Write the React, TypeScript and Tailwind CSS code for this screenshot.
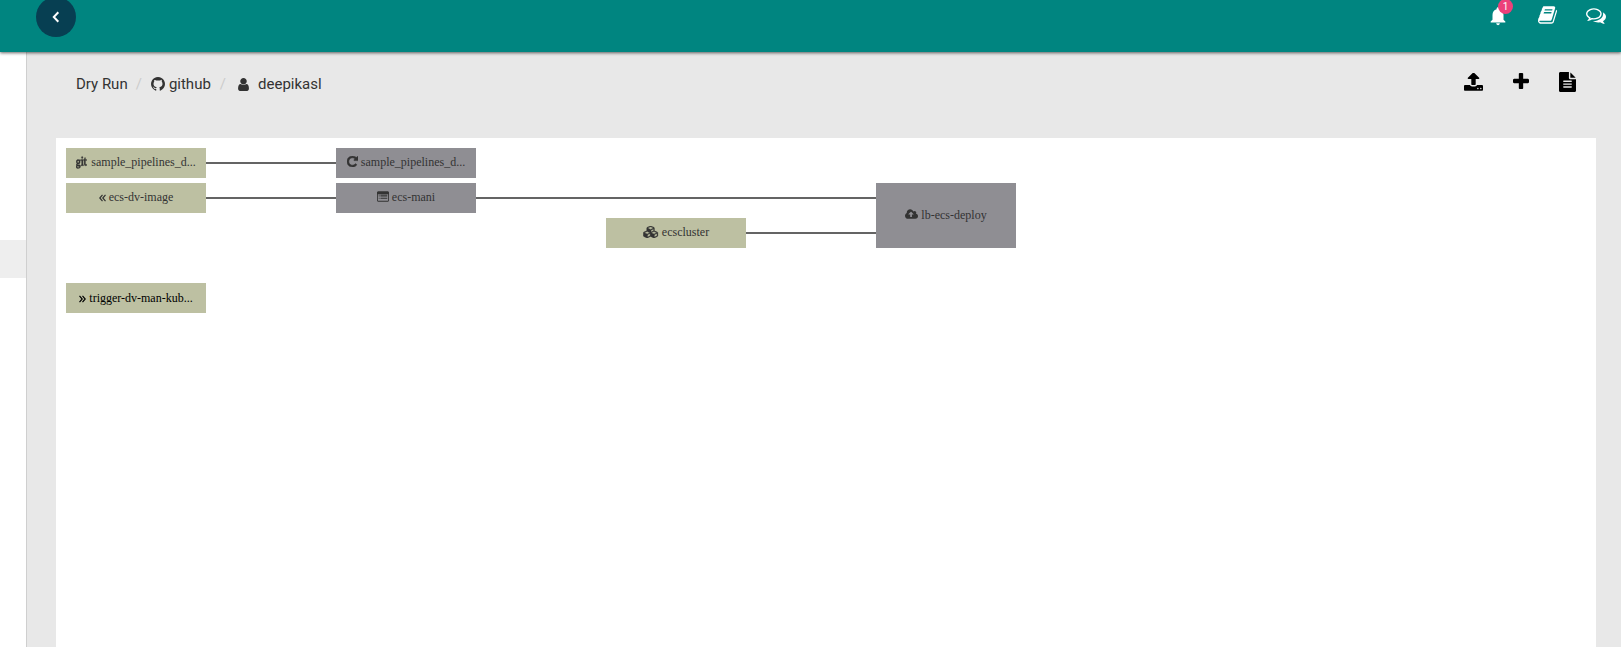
import type { ReactNode } from "react";
import { FaGit } from "react-icons/fa";
import { MdNotifications } from "react-icons/md";

const paths = {
  github:
    "M704 0q209 0 385.5 103t279.5 279.5 103 385.5q0 251-146.5 451.5t-378.5 277.5q-27 5-40-7t-13-30q0-3 .5-76.5t.5-134.5q0-97-52-142 57-6 102.5-18t94-39 81-66.5 53-105 20.5-150.5q0-119-79-206 37-91-8-204-28-9-81 11t-92 44l-38 24q-93-26-192-26t-192 26q-16-11-42.5-27t-83.5-38.5-85-13.5q-45 113-8 204-79 87-79 206 0 85 20.5 150t52.5 105 80.5 67 94 39 102.5 18q-39 36-49 103-21 10-45 15t-57 5-65.5-21.5-55.5-62.5q-19-32-48.5-52t-49.5-24l-20-3q-21 0-29 4.5t-5 11.5 9 14 13 12l7 5q22 10 43.5 38t31.5 51l10 23q13 38 44 61.5t67 30 69.5 7 55.5-3.5l23-4q0 38 .5 88.5t.5 54.5q0 18-13 30t-40 7q-232-77-378.5-277.5t-146.5-451.5q0-209 103-385.5t279.5-279.5 385.5-103z",
  user: "M1536 1399q0 109-62.5 187t-150.5 78h-854q-88 0-150.5-78t-62.5-187q0-85 8.5-160.5t31.5-152 58.5-131 94-89 134.5-34.5q131 128 313 128t313-128q76 0 134.5 34.5t94 89 58.5 131 31.5 152 8.5 160.5zm-256-887q0 159-112.5 271.5t-271.5 112.5-271.5-112.5-112.5-271.5 112.5-271.5 271.5-112.5 271.5 112.5 112.5 271.5z",
  book: "M1639 478q40 57 18 129l-275 906q-19 64-76.5 107.5t-122.5 43.5h-923q-77 0-148.5-53.5t-99.5-131.5q-24-67-2-127 0-4 3-27t4-37q1-8-3-21.5t-3-19.5q2-11 8-21t16.5-23.5 16.5-23.5q23-38 45-91.5t30-91.5q3-10 .5-30t-.5-28q3-11 17-28t17-23q21-36 42-92t25-90q1-9-2.5-32t.5-28q4-13 22-30.5t22-22.5q19-26 42.5-84.5t27.5-96.5q1-8-3-25.5t-2-26.5q2-8 9-18t18-23 17-21q8-12 16.5-30.5t15-35 16-36 19.5-32 26.5-23.5 36-11.5 47.5 5.5l-1 3q38-9 51-9h761q74 0 114 56t18 130l-274 906q-36 119-71.5 153.5t-128.5 34.5h-869q-27 0-38 15-11 16-1 43 24 70 144 70h923q29 0 56-15.5t35-41.5l300-987q7-22 5-57 38 15 59 43zm-1064 2q-4 13 2 22.5t20 9.5h608q13 0 25.5-9.5t16.5-22.5l21-64q4-13-2-22.5t-20-9.5h-608q-13 0-25.5 9.5t-16.5 22.5zm-83 256q-4 13 2 22.5t20 9.5h608q13 0 25.5-9.5t16.5-22.5l21-64q4-13-2-22.5t-20-9.5h-608q-13 0-25.5 9.5t-16.5 22.5z",
  comments:
    "M704 384q-153 0-286 52t-211.5 141-78.5 191q0 82 53 158t149 132l97 56-35 84q34-20 62-39l44-31 53 10q78 14 153 14 153 0 286-52t211.5-141 78.5-191-78.5-191-211.5-141-286-52zm0-128q191 0 353.5 68.5t256.5 186.5 94 257-94 257-256.5 186.5-353.5 68.5q-86 0-176-16-124 88-278 128-36 9-86 16h-3q-11 0-20.5-8t-11.5-21q-1-3-1-6.5t.5-6.5 2-6l2.5-5 3.5-5.5 4-5 4.5-5 4-4.5q5-6 23-25t26-29.5 22.5-29 25-38.5 20.5-44q-124-72-195-177t-71-224q0-139 94-257t256.5-186.5 353.5-68.5zm822 1169q10 24 20.5 44t25 38.5 22.5 29 26 29.5 23 25q1 1 4 4.5t4.5 5 4 5 3.5 5.5l2.5 5 2 6 .5 6.5-1 6.5q-3 14-13 22t-22 7q-50-7-86-16-154-40-278-128-90 16-176 16-271 0-472-132 58 4 88 4 161 0 309-45t264-129q125-92 192-212t67-254q0-77-23-152 129 71 204 178t75 230q0 120-71 224.5t-195 176.5z",
  upload:
    "M1344 1472q0-26-19-45t-45-19-45 19-19 45 19 45 45 19 45-19 19-45zm256 0q0-26-19-45t-45-19-45 19-19 45 19 45 45 19 45-19 19-45zm128-224v320q0 40-28 68t-68 28h-1472q-40 0-68-28t-28-68v-320q0-40 28-68t68-28h427q21 56 70.5 92t110.5 36h256q61 0 110.5-36t70.5-92h427q40 0 68 28t28 68zm-325-648q-17 40-59 40h-256v448q0 26-19 45t-45 19h-256q-26 0-45-19t-19-45v-448h-256q-42 0-59-40-17-39 14-70l448-448q18-19 45-19t45 19l448 448q31 31 14 70z",
  plus: "M1600 736v192q0 40-28 68t-68 28h-416v416q0 40-28 68t-68 28h-192q-40 0-68-28t-28-68v-416h-416q-40 0-68-28t-28-68v-192q0-40 28-68t68-28h416v-416q0-40 28-68t68-28h192q40 0 68 28t28 68v416h416q40 0 68 28t28 68z",
  file: "M1596 476q14 14 28 36h-472v-472q22 14 36 28zm-476 164h544v1056q0 40-28 68t-68 28h-1344q-40 0-68-28t-28-68v-1600q0-40 28-68t68-28h800v544q0 40 28 68t68 28zM1280 1376v-64q0-14-9-23t-23-9h-704q-14 0-23 9t-9 23v64q0 14 9 23t23 9h704q14 0 23-9t9-23zm0-256v-64q0-14-9-23t-23-9h-704q-14 0-23 9t-9 23v64q0 14 9 23t23 9h704q14 0 23-9t9-23zm0-256v-64q0-14-9-23t-23-9h-704q-14 0-23 9t-9 23v64q0 14 9 23t23 9h704q14 0 23-9t9-23z",
  repeat:
    "M1536 256v448q0 26-19 45t-45 19h-448q-42 0-59-40-17-39 14-69l138-138q-148-137-349-137-104 0-198.5 40.5t-163.5 109.5-109.5 163.5-40.5 198.5 40.5 198.5 109.5 163.5 163.5 109.5 198.5 40.5q119 0 225-52t179-147q7-10 23-12 15 0 25 9l137 138q9 8 9.5 20.5t-7.5 22.5q-109 132-264 204.5t-327 72.5q-156 0-298-61t-245-164-164-245-61-298 61-298 164-245 245-164 298-61q147 0 284.5 55.5t244.5 156.5l130-129q29-31 70-14 39 17 39 59z",
  list: "M0 288q0-66 47-113t113-47h1472q66 0 113 47t47 113v1216q0 66-47 113t-113 47h-1472q-66 0-113-47t-47-113zM128 544v960q0 32 32 32h1472q32 0 32-32v-960zM256 640h128v128h-128zM512 640h1024v128h-1024zM256 896h128v128h-128zM512 896h1024v128h-1024zM256 1152h128v128h-128zM512 1152h1024v128h-1024z",
  cubes:
    "M640 1632l384-192v-314l-384 164v342zm-64-454l404-173-404-173-404 173zm1088 454l384-192v-314l-384 164v342zm-64-454l404-173-404-173-404 173zm-448-293l384-165v-266l-384 164v267zm-64-379l441-189-441-189-441 189zm1088 518v416q0 36-19 67t-52 47l-448 224q-25 14-57 14t-57-14l-448-224q-4-2-7-4-2 2-7 4l-448 224q-25 14-57 14t-57-14l-448-224q-33-16-52-47t-19-67v-416q0-38 21.5-70t56.5-48l434-186v-400q0-38 21.5-70t56.5-48l448-192q23-10 50-10t50 10l448 192q35 16 56.5 48t21.5 70v400l434 186q36 16 57 48t21 70z",
  cloud:
    "M1280 864q0-14-9-23l-352-352q-9-9-23-9t-23 9l-351 351q-10 12-10 24 0 14 9 23t23 9h224v352q0 13 9.5 22.5t22.5 9.5h192q13 0 22.5-9.5t9.5-22.5v-352h224q13 0 22.5-9.5t9.5-22.5zm640 288q0 159-112.5 271.5t-271.5 112.5h-1088q-185 0-316.5-131.5t-131.5-316.5q0-130 70-240t188-165q-2-30-2-43 0-212 150-362t362-150q156 0 285.5 87t188.5 231q71-62 166-62 106 0 181 75t75 181q0 76-41 138 130 31 213.5 135.5t83.5 238.5z",
};

function Icon({ name, box, className }: { name: keyof typeof paths; box: string; className: string }) {
  return (
    <svg viewBox={box} fill="currentColor" fillRule={name === "list" ? "evenodd" : "nonzero"} className={`shrink-0 ${className}`}>
      <path d={paths[name]} />
    </svg>
  );
}

function Chevrons({ flip = false }: { flip?: boolean }) {
  return (
    <svg viewBox="0.5 0 7 8" fill="none" stroke="currentColor" strokeWidth="1.2" className={flip ? "mt-px h-2 w-[7px] -scale-x-100" : "mt-px h-2 w-[7px]"}>
      <path d="M4 .8 1.3 4l2.7 3.2M7 .8l-2.7 3.2 2.7 3.2" />
    </svg>
  );
}

function Node({ place, icon, label }: { place: string; icon: ReactNode; label: string }) {
  return (
    <div className={`absolute flex w-[140px] items-center justify-center gap-[3px] font-['Liberation_Serif',serif] text-[12px] leading-[14px] ${place}`}>
      {icon}
      <span>{label}</span>
    </div>
  );
}

const resource = "bg-[#bdc0a2]";
const job = "bg-[#8f8e93]";

export default function App() {
  return (
    <div className="flex h-[647px] w-full flex-col overflow-hidden bg-[#e8e8e8] font-[Roboto,sans-serif] text-[#333]">
      <header className="z-10 flex h-[52px] shrink-0 items-start justify-between bg-[#008580] pr-[15px] pl-9 text-white shadow-[0_1px_3px_rgba(0,0,0,0.6)]">
        <button aria-label="Back" className="-mt-[3px] flex size-10 items-center justify-center rounded-full bg-[#073f52]">
          <svg viewBox="0 0 8 12" fill="none" stroke="currentColor" strokeWidth="2" className="h-3 w-2">
            <path d="M6.3 1.3 1.8 6l4.5 4.7" />
          </svg>
        </button>
        <div className="flex items-start">
          <div className="relative mt-[5px] mr-[29px] size-[22px]">
            <MdNotifications className="size-[22px]" />
            <span className="absolute -top-[6px] left-[11px] flex size-[15px] items-center justify-center rounded-full bg-[#ec407a] text-[10px] leading-none">1</span>
          </div>
          <Icon name="book" box="0 128 1664 1536" className="mt-[6px] mr-[29px] h-[18px] w-[19px]" />
          <Icon name="comments" box="0 256 1792 1408" className="mt-[8px] h-4 w-5" />
        </div>
      </header>
      <div className="flex min-h-0 flex-1">
        <aside className="w-[27px] shrink-0 border-r border-[#cfcfcf] bg-white pt-[188px]">
          <div className="h-[38px] bg-[#eeeeee]" />
        </aside>
        <main className="flex min-w-0 flex-1 flex-col pr-[25px] pl-[29px]">
          <div className="flex h-[86px] shrink-0 items-start justify-between">
            <nav className="flex items-center pt-5 pl-5 text-[15px] leading-[24px]">
              <span>Dry Run</span>
              <span className="ml-[8px] text-[#ccc]">/</span>
              <Icon name="github" box="-64 0 1536 1536" className="ml-[9px] size-[14px]" />
              <span className="ml-[4px]">github</span>
              <span className="ml-[9px] text-[#ccc]">/</span>
              <Icon name="user" box="256 128 1280 1536" className="ml-3 h-[13px] w-[11px]" />
              <span className="ml-[9px]">deepikasl</span>
            </nav>
            <div className="flex items-start pt-5 pr-5 text-black">
              <Icon name="upload" box="64 128 1664 1536" className="mt-px mr-[30px] h-[18px] w-[19px]" />
              <Icon name="plus" box="192 128 1408 1408" className="mt-px mr-[30px] size-4" />
              <Icon name="file" box="128 0 1536 1792" className="h-5 w-[17px]" />
            </div>
          </div>
          <section className="relative flex-1 bg-white">
            <svg className="absolute inset-0 size-full" stroke="#646464" strokeWidth="2">
              <path d="M150 25h130M150 60h130M420 60h400M690 95h130" />
            </svg>
            <Node place={`left-[10px] top-[10px] h-[30px] pb-[2px] ${resource}`} icon={<FaGit className="mr-px size-[11px] scale-y-135 stroke-current stroke-[12]" />} label="sample_pipelines_d..." />
            <Node place={`left-[10px] top-[45px] h-[30px] pb-[2px] ${resource}`} icon={<Chevrons />} label="ecs-dv-image" />
            <Node place={`left-[10px] top-[145px] h-[30px] text-black ${resource}`} icon={<Chevrons flip />} label="trigger-dv-man-kub..." />
            <Node place={`left-[280px] top-[10px] h-[30px] pb-[2px] ${job}`} icon={<Icon name="repeat" box="0 128 1536 1536" className="-mt-px size-[11px] stroke-current stroke-[80]" />} label="sample_pipelines_d..." />
            <Node place={`left-[280px] top-[45px] h-[30px] pb-[2px] ${job}`} icon={<Icon name="list" box="0 128 1792 1536" className="-mt-[2px] h-[11px] w-3" />} label="ecs-mani" />
            <Node place={`left-[550px] top-[80px] h-[30px] pb-[2px] ${resource}`} icon={<Icon name="cubes" box="0 0 2304 1792" className="h-3 w-4 stroke-current stroke-[50]" />} label="ecscluster" />
            <Node place={`left-[820px] top-[45px] h-[65px] pb-[2px] ${job}`} icon={<Icon name="cloud" box="0 128 1920 1536" className="h-[11px] w-[13px]" />} label="lb-ecs-deploy" />
          </section>
        </main>
      </div>
    </div>
  );
}
